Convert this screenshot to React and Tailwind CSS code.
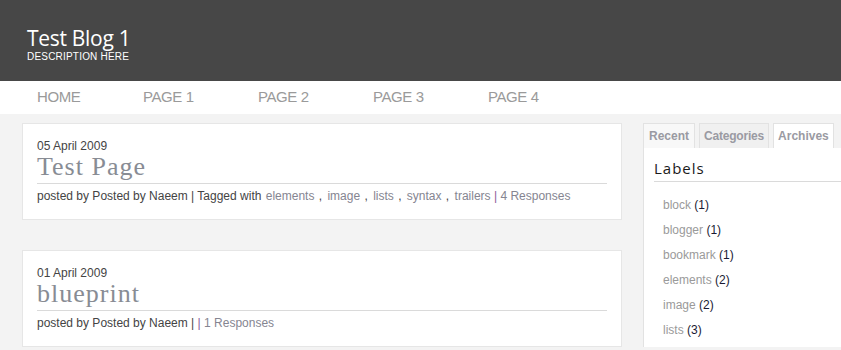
const posts = [
  {
    date: "05 April 2009",
    title: "Test Page",
    tags: ["elements", "image", "lists", "syntax", "trailers"],
    responses: "4 Responses",
  },
  {
    date: "01 April 2009",
    title: "blueprint",
    tags: [],
    responses: "1 Responses",
  },
];

const labels = [
  ["block", 1],
  ["blogger", 1],
  ["bookmark", 1],
  ["elements", 2],
  ["image", 2],
  ["lists", 3],
];

const nav = [
  ["HOME", "w-[106px]"],
  ["PAGE 1", "w-[115px]"],
  ["PAGE 2", "w-[115px]"],
  ["PAGE 3", "w-[115px]"],
  ["PAGE 4", "w-[115px]"],
];

const Post = ({ post }) => (
  <div className="bg-white border border-[#e6e6e6] pt-[14px] px-[14px] pb-[13px]">
    <p className="text-[12px] leading-[16px] text-[#444]">{post.date}</p>
    <h2
      className="text-[26px] leading-[26px] text-[#888c94] tracking-[1px] pb-[2px]"
      style={{ fontFamily: '"Liberation Serif", serif' }}
    >
      {post.title}
    </h2>
    <div className="border-t border-[#dadada] mt-[1px]" />
    <p className="text-[12px] leading-[20px] text-[#444] pt-[2px]">
      posted by Posted by Naeem |{" "}
      {post.tags.length > 0 && (
        <>
          Tagged with{" "}
          {post.tags.map((t, i) => (
            <span key={t}>
              <a href="#" className="text-[#858591] ml-[1px]">{t}</a>
              {i < post.tags.length - 1 ? <span className="mx-[1px]"> , </span> : " "}
            </span>
          ))}
        </>
      )}
      <span className="text-[#8a5a9a]">|</span>{" "}
      <a href="#" className="text-[#858591]">{post.responses}</a>
    </p>
  </div>
);

const App = () => {
  return (
    <div className="min-h-[350px] bg-[#f3f3f3]" style={{ fontFamily: '"Liberation Sans", Arial, sans-serif' }}>
      {/* Header */}
      <div className="h-[81px] bg-[#474747] pt-[25px] pl-[27px] text-white">
        <h1 className="text-[21px] leading-[26px] tracking-[-0.3px]" style={{ fontFamily: '"Open Sans", sans-serif' }}>
          Test Blog 1
        </h1>
        <p className="text-[10px] leading-[12px] tracking-[0.2px] uppercase">Description here</p>
      </div>

      {/* Nav */}
      <div className="h-[33px] bg-white flex items-center pl-[37px]">
        {nav.map(([p, w]) => (
          <a key={p} href="#" className={`${w} text-[15px] tracking-[-0.4px] text-[#9a9a9a]`}>
            {p}
          </a>
        ))}
      </div>

      {/* Body */}
      <div className="flex pl-[22px] pt-[9px] gap-[21px]">
        <div className="w-[600px] flex flex-col gap-[30px]">
          {posts.map((p) => (
            <Post key={p.title} post={p} />
          ))}
        </div>

        <div className="flex-1 flex flex-col">
          <div className="flex gap-[4px] h-[25px]">
            <div className="px-[5px] bg-[#f8f8f8] border border-b-0 border-[#e2e2e2] text-[12px] font-bold text-[#9a9aa2] leading-[24px]">
              Recent
            </div>
            <div className="px-[4px] bg-[#f0f0f0] border border-b-0 border-[#e2e2e2] text-[12px] font-bold text-[#9a9aa2] leading-[24px] tracking-[-0.2px]">
              Categories
            </div>
            <div className="px-[4px] bg-white border border-b-0 border-[#e2e2e2] text-[12px] font-bold text-[#9a9aa2] leading-[24px]">
              Archives
            </div>
          </div>
          <div className="bg-white border-l border-[#e2e2e2] flex-1 pl-[10px] pt-[9px]">
            <h3
              className="text-[15px] leading-[22px] tracking-[1px] text-[#1a1a1a] pb-[2px] border-b border-[#dadada]"
              style={{ fontFamily: '"Open Sans", sans-serif' }}
            >
              Labels
            </h3>
            <ul className="pl-[9px] pt-[11px]">
              {labels.map(([name, n]) => (
                <li key={name} className="text-[12px] leading-[25px]">
                  <a href="#" className="text-[#9a9a9a]">{name}</a>{" "}
                  <span className="text-[#1a1a33]">({n})</span>
                </li>
              ))}
            </ul>
          </div>
        </div>
      </div>
    </div>
  );
};

export default App;
